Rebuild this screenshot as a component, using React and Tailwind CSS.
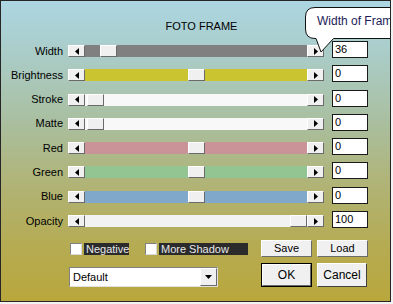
import React from 'react';

const rows = [
  { label: 'Width', track: 'bg-[#808080]', pos: 15, value: '36' },
  { label: 'Brightness', track: 'bg-[#c9c42f]', pos: 103, value: '0' },
  { label: 'Stroke', track: 'bg-[#f8f8f8]', pos: 2, value: '0' },
  { label: 'Matte', track: 'bg-[#f8f8f8]', pos: 2, value: '0' },
  { label: 'Red', track: 'bg-[#c99397]', pos: 103, value: '0' },
  { label: 'Green', track: 'bg-[#93c593]', pos: 103, value: '0' },
  { label: 'Blue', track: 'bg-[#80a8ca]', pos: 103, value: '0' },
  { label: 'Opacity', track: 'bg-[#f2f2f2]', pos: 205, value: '100' },
];

const raised =
  'bg-[#f0f0f0] border border-t-white border-l-white border-r-[#6a6a6a] border-b-[#6a6a6a]';

const ArrowBtn = ({ dir }) => (
  <div className={`w-[17px] h-[12px] flex items-center justify-center ${raised}`}>
    <svg width="4" height="7" viewBox="0 0 4 7">
      {dir === 'left' ? (
        <polygon points="4,0 0,3.5 4,7" fill="#000" />
      ) : (
        <polygon points="0,0 4,3.5 0,7" fill="#000" />
      )}
    </svg>
  </div>
);

const SliderRow = ({ label, track, pos, value }) => (
  <div className="flex h-[17px]">
    <div className="w-[62px] self-end mb-[1px] h-[12px] flex items-center justify-end text-[11px] leading-none text-black">
      {label}
    </div>
    <div className="ml-[5px] flex self-end mb-[1px]">
      <ArrowBtn dir="left" />
      <div className={`w-[222px] h-[12px] flex ${track}`}>
        <div className={`w-[17px] h-[12px] ${raised}`} style={{ marginLeft: pos }} />
      </div>
      <ArrowBtn dir="right" />
    </div>
    <div className="ml-[8px] w-[36px] h-[17px] bg-white border border-[#1a1a1a] text-[11px] leading-[15px] pl-[2px] text-black">
      {value}
    </div>
  </div>
);

const Check = ({ label, w }) => (
  <div className="flex items-center">
    <div className="w-[12px] h-[12px] bg-white border border-t-[#808080] border-l-[#808080] border-r-[#d8d8d8] border-b-[#d8d8d8]" />
    <div
      className={`ml-[2px] h-[12px] bg-[#2b2b2b] text-[#e8e8e8] text-[11px] leading-[12px] pl-[2px] ${w}`}
    >
      {label}
    </div>
  </div>
);

const Btn = ({ children, w }) => (
  <div
    className={`${w} h-[17px] flex items-center justify-center text-[11px] text-black ${raised}`}
  >
    {children}
  </div>
);

export default function App() {
  return (
    <div className="w-[393px] h-[304px] bg-[#f2f2f2] font-['Liberation_Sans',Arial,sans-serif]">
      <div className="relative w-[391px] h-[302px] overflow-hidden border border-[#262626] bg-[linear-gradient(180deg,#acd6e3_0%,#aacbc4_20%,#a9bfa0_40%,#b0b478_60%,#b5ab52_82%,#b9a73c_100%)] flex flex-col">
        <div className="mt-[18px] h-[14px] text-center text-[11px] leading-[14px] text-black pl-[12px]">
          FOTO FRAME
        </div>

        <div className="mt-[8px] flex flex-col gap-[7.3px]">
          {rows.map((r) => (
            <SliderRow key={r.label} {...r} />
          ))}
        </div>

        <div className="mt-[12px] flex items-center pl-[69px] h-[17px]">
          <Check label="Negative" w="w-[45px]" />
          <div className="ml-[16px]">
            <Check label="More Shadow" w="w-[89px]" />
          </div>
          <div className="ml-[13px]">
            <Btn w="w-[51px]">Save</Btn>
          </div>
          <div className="ml-[5px]">
            <Btn w="w-[51px]">Load</Btn>
          </div>
        </div>

        <div className="mt-[6px] flex pl-[68px] h-[24px]">
          <div className="self-end w-[149px] h-[20px] bg-white border border-t-[#808080] border-l-[#808080] border-r-[#e0e0e0] border-b-[#e0e0e0] flex">
            <div className="flex-1 text-[11px] leading-[18px] pl-[3px] text-black">Default</div>
            <div className={`w-[17px] h-full flex items-center justify-center ${raised}`}>
              <svg width="7" height="4" viewBox="0 0 7 4">
                <polygon points="0,0 7,0 3.5,4" fill="#000" />
              </svg>
            </div>
          </div>
          <div className="ml-[43px] w-[51px] h-[24px] border border-black">
            <div className={`w-full h-full flex items-center justify-center text-[12px] text-black ${raised}`}>
              OK
            </div>
          </div>
          <div className="ml-[5px] w-[50px] h-[24px] flex items-center justify-center text-[12px] text-black bg-[#f0f0f0] border border-t-white border-l-white border-r-[#404040] border-b-[#404040]">
            Cancel
          </div>
        </div>

        <svg
          className="absolute left-[299px] top-0"
          width="92"
          height="60"
          viewBox="0 0 92 60"
        >
          <path
            d="M5.5,16 Q5.5,6.5 15,6.5 L100,6.5 L100,37.5 L33.5,37.5 L21,51 L16,37.5 L15,37.5 Q5.5,37.5 5.5,28 Z"
            fill="#ffffff"
            stroke="#111111"
            strokeWidth="1"
          />
        </svg>
        <div className="absolute left-[316px] top-[13px] text-[12px] leading-[14px] text-[#1c1c58] whitespace-nowrap">
          Width of Fram
        </div>
      </div>
    </div>
  );
}
